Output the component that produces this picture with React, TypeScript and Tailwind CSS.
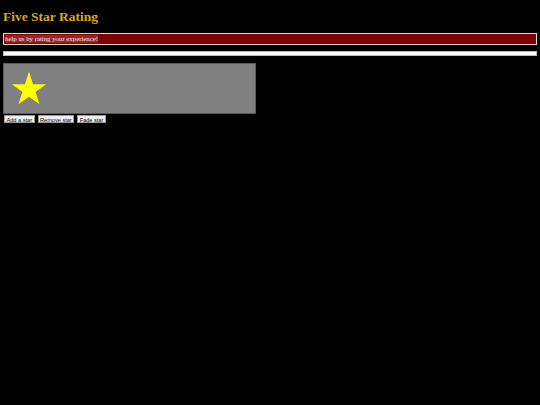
export default function App() {
  return (
    <div className="min-h-[405px] w-[540px] bg-black px-[3px] pt-[7px]" style={{ fontFamily: '"Liberation Serif", serif' }}>
      <h1 className="text-[13.5px] leading-[20px] font-bold text-[#daa520] m-0" style={{ fontFamily: '"Liberation Serif", serif' }}>
        Five Star Rating
      </h1>
      <div className="mt-[6px] h-[12px] border-[1.5px] border-[#d8d8d8] bg-[#800000] flex items-center px-[1px]">
        <span className="text-[6.8px] leading-[8px] text-[#f4e4e4] bg-[#962626]" style={{ fontFamily: '"Liberation Serif", serif' }}>
          help us by rating your experience!
        </span>
      </div>
      <div className="mt-[6px] h-[5px] border border-[#bbbbbb] bg-white"></div>
      <div className="mt-[7px] w-[253px] h-[51px] bg-[#808080] border border-[#5a5a5a] flex items-center pl-[7px] pt-[1px]">
        <svg width="36" height="36" viewBox="0 0 100 100">
          <polygon
            points="50,2 61.2,36.6 97.6,36.6 68.2,58 79.4,92.6 50,71.2 20.6,92.6 31.8,58 2.4,36.6 38.8,36.6"
            fill="#ffff00"
          />
        </svg>
      </div>
      <div className="mt-[1px] flex gap-[3px] pl-[1px]">
        {["Add a star", "Remove star", "Fade star"].map((t) => (
          <button
            key={t}
            className="h-[8px] px-[1.5px] bg-[#efefef] text-black text-[5.6px] leading-[8px] border border-[#999]"
            style={{ fontFamily: '"Liberation Sans", sans-serif' }}
          >
            {t}
          </button>
        ))}
      </div>
    </div>
  );
}
